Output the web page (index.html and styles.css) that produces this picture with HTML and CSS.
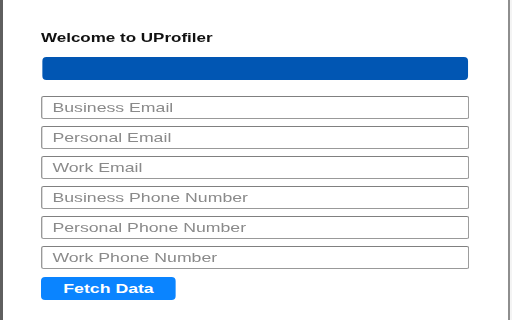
FILE: index.html
```html
<!DOCTYPE html>
<html>
<head>
<meta charset="utf-8">
<link rel="stylesheet" href="styles.css">
</head>
<body>
<div class="window">
  <div class="edge-left"></div>
  <div class="panel">
    <div class="stretch">
      <h1 class="title">Welcome to UProfiler</h1>
      <div class="bar"></div>
      <form class="form">
        <input class="field" type="text" placeholder="Business Email">
        <input class="field" type="text" placeholder="Personal Email">
        <input class="field" type="text" placeholder="Work Email">
        <input class="field" type="text" placeholder="Business Phone Number">
        <input class="field" type="text" placeholder="Personal Phone Number">
        <input class="field" type="text" placeholder="Work Phone Number">
        <button class="fetch" type="button">Fetch Data</button>
      </form>
    </div>
  </div>
  <div class="edge-right"></div>
  <div class="edge-gap"></div>
</div>
</body>
</html>
```
FILE: styles.css
```css
html, body {
  margin: 0;
  padding: 0;
  background: #ffffff;
}
body {
  width: 512px;
  height: 320px;
  overflow: hidden;
  font-family: "Liberation Sans", Arial, sans-serif;
}
.window {
  display: flex;
  height: 320px;
}
.edge-left {
  width: 3px;
  background: #5f5f5f;
}
.panel {
  width: 467px;
  padding: 30px 0 0 38px;
  box-sizing: content-box;
}
.stretch {
  width: 320px;
  transform: scaleX(1.36);
  transform-origin: 0 0;
}
.edge-right {
  width: 2px;
  background: #8e8e8e;
}
.edge-gap {
  width: 2px;
  background: #f4f4f4;
}
.title {
  margin: 0;
  font-size: 12.5px;
  line-height: 16px;
  font-weight: bold;
  color: #111111;
}
.bar {
  margin: 11px 0 0 0.7px;
  width: 313.2px;
  height: 23px;
  border-radius: 3px / 4px;
  background: #0156b3;
}
.form {
  display: flex;
  flex-direction: column;
  align-items: flex-start;
  gap: 7px;
  margin: 16px 0 0 0;
}
.field {
  box-sizing: border-box;
  width: 314.7px;
  height: 23px;
  margin: 0;
  padding: 0 0 0 7.4px;
  border: 1px solid #999999;
  border-top-color: #808080;
  border-radius: 2px;
  background: #ffffff;
  font-family: "Liberation Sans", Arial, sans-serif;
  font-size: 13px;
  color: #333333;
  outline: none;
}
.field::placeholder {
  color: #8a8a8a;
  opacity: 1;
}
.fetch {
  margin-top: 1px;
  width: 99.3px;
  height: 23px;
  padding: 0;
  border: none;
  border-radius: 3px / 4px;
  background: #0a84ff;
  color: #ffffff;
  font-family: "Liberation Sans", Arial, sans-serif;
  font-size: 13px;
  font-weight: bold;
  cursor: pointer;
}
```
